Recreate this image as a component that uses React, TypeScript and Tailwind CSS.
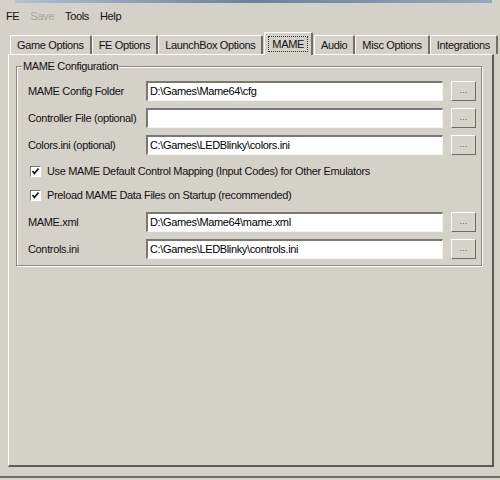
import React from 'react'

const tabs = ['Game Options', 'FE Options', 'LaunchBox Options', 'MAME', 'Audio', 'Misc Options', 'Integrations']

function TextBox({ value }: { value: string }) {
  return (
    <div className="flex-1 h-[20px] bg-white border-t-2 border-l-2 border-t-[#7a7870] border-l-[#7a7870] border-b border-r border-b-[#f4f3ee] border-r-[#f4f3ee] flex items-center pl-[2px] text-[11px] text-black whitespace-nowrap overflow-hidden">
      {value}
    </div>
  )
}

function Browse() {
  return (
    <div className="w-[25px] h-[20px] ml-[8px] border border-t-white border-l-white border-b-[#6f6d66] border-r-[#6f6d66] bg-[#d6d3ca] flex items-center justify-center text-[9px] text-[#555] leading-none pb-[2px] tracking-normal">
      ...
    </div>
  )
}

function Row({ label, value }: { label: string; value: string }) {
  return (
    <div className="flex items-center h-[20px]">
      <div className="w-[118px] text-[11px] whitespace-nowrap">{label}</div>
      <TextBox value={value} />
      <Browse />
    </div>
  )
}

function Check({ label }: { label: string }) {
  return (
    <div className="flex items-center h-[16px] pl-[2px]">
      <div className="w-[11px] h-[11px] bg-white border-t border-l border-t-[#7a7870] border-l-[#7a7870] border-b border-r border-b-white border-r-white flex items-center justify-center">
        <svg width="9" height="9" viewBox="0 0 9 9">
          <path d="M1.5 4 L3.5 6.5 L7.5 1.5" stroke="#111" strokeWidth="1.7" fill="none" />
        </svg>
      </div>
      <span className="ml-[6px] text-[11px] whitespace-nowrap">{label}</span>
    </div>
  )
}

export default function App() {
  return (
    <div className="w-[500px] h-[480px] bg-[#d4d1c8] flex flex-col text-[#111] overflow-hidden tracking-[-0.35px]" style={{ fontFamily: '"Liberation Sans", Arial, sans-serif' }}>
      <div className="h-[3px] ml-[15px] mr-[8px] bg-gradient-to-r from-[#b7c0cf] via-[#6f7f9c] to-[#9aa7bd]" />
      <div className="flex items-center h-[24px] pl-[6px] gap-[11px] text-[11px] pt-[2px]">
        <span>FE</span>
        <span className="text-[#a8a59e]">Save</span>
        <span>Tools</span>
        <span>Help</span>
      </div>

      <div className="flex items-end pl-[10px] h-[27px]">
        {tabs.map(t =>
          t === 'MAME' ? (
            <div key={t} className="relative z-10 -mb-[1px] h-[23px] px-[3px] mx-[1px] bg-[#d4d1c8] border-t border-l border-t-white border-l-white border-r-2 border-r-[#6f6d66] rounded-t-[2px] flex items-center text-[11px]">
              <span className="border border-dotted border-[#333] px-[3px] leading-[14px]">{t}</span>
            </div>
          ) : (
            <div key={t} className="h-[19px] px-[6px] border-t border-l border-t-white border-l-white border-r-2 border-r-[#6f6d66] rounded-t-[2px] flex items-center text-[11px] whitespace-nowrap">
              {t}
            </div>
          )
        )}
      </div>

      <div className="ml-[8px] mr-[6px] h-[413px] border-t border-l border-t-white border-l-white border-r-2 border-b-2 border-r-[#5d5b55] border-b-[#5d5b55] px-[7px] pt-[11px]">
        <div className="relative mr-[3px] border border-[#8a877f] shadow-[inset_1px_1px_0_#fff,1px_1px_0_#fff] pl-[11px] pr-[5px] pt-[14px] pb-[6px]">
          <div className="absolute -top-[8px] left-[5px] bg-[#d4d1c8] px-[1px] text-[11px] leading-[14px]">MAME Configuration</div>
          <div className="flex flex-col gap-[7px]">
            <Row label="MAME Config Folder" value="D:\Games\Mame64\cfg" />
            <Row label="Controller File (optional)" value="" />
            <Row label="Colors.ini (optional)" value="C:\Games\LEDBlinky\colors.ini" />
          </div>
          <div className="flex flex-col gap-[8px] mt-[8px]">
            <Check label="Use MAME Default Control Mapping (Input Codes) for Other Emulators" />
            <Check label="Preload MAME Data Files on Startup (recommended)" />
          </div>
          <div className="flex flex-col gap-[7px] mt-[9px]">
            <Row label="MAME.xml" value="D:\Games\Mame64\mame.xml" />
            <Row label="Controls.ini" value="C:\Games\LEDBlinky\controls.ini" />
          </div>
        </div>
      </div>

      <div className="mt-[9px] h-[2px] bg-[#6f6d66]" />
    </div>
  )
}
